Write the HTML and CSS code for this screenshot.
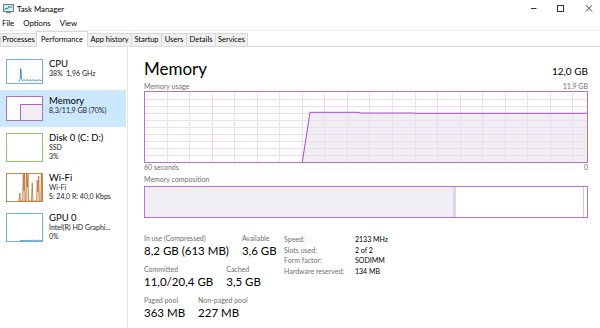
FILE: index.html
```html
<!DOCTYPE html>
<html>
<head>
<meta charset="utf-8">
<title>Task Manager</title>
<link rel="stylesheet" href="styles.css">
</head>
<body>
<div class="titlebar">
  <svg class="app-icon" width="11" height="11" viewBox="0 0 11 11">
    <rect x="0.5" y="1.5" width="10" height="7" fill="#d6ecfa" stroke="#6f8294"/>
    <polyline points="1.5,7 3,5 4.5,6 6,3 7.5,5 9.5,2.5" fill="none" stroke="#2f8f3a" stroke-width="0.9"/>
    <rect x="3" y="9" width="5" height="1.2" fill="#6f8294"/>
  </svg>
  <span class="title">Task Manager</span>
  <svg class="winctl" width="80" height="16" viewBox="0 0 80 16">
    <line x1="11" y1="8.5" x2="16.5" y2="8.5" stroke="#333" stroke-width="1"/>
    <rect x="37.5" y="5.5" width="6" height="6" fill="none" stroke="#333" stroke-width="1"/>
    <path d="M66 5.2L72 11.5M72 5.2L66 11.5" stroke="#333" stroke-width="0.9" fill="none"/>
  </svg>
</div>
<div class="menubar">
  <span>File</span><span>Options</span><span>View</span>
</div>
<div class="tabs">
  <div class="tab w1 first">Processes</div>
  <div class="tab w2 active">Performance</div>
  <div class="tab w3">App history</div>
  <div class="tab w4">Startup</div>
  <div class="tab w5">Users</div>
  <div class="tab w6">Details</div>
  <div class="tab w7">Services</div>
</div>
<div class="main">
  <div class="sidebar">
    <div class="item">
      <svg class="thumb" width="37" height="25" viewBox="0 0 37 25">
        <rect x="0.5" y="0.5" width="36" height="24" fill="#fff" stroke="#6fb0df"/>
        <polyline fill="none" stroke="#1f7fc1" stroke-width="0.8" points="13.5,22.5 14.2,20 14.8,9.5 15.5,19.5 16.5,21.6 18,20.8 19.5,21.7 21,20.6 22.5,21.6 24,20.9 25.5,21.7 27,20.7 28.5,21.5 30,20.9 31.5,21.6 33,20.8 34.5,21.5 36,21"/>
      </svg>
      <div class="info">
        <div class="name">CPU</div>
        <div class="sub">38%&nbsp; 1,96 GHz</div>
      </div>
    </div>
    <div class="item selected">
      <svg class="thumb" width="37" height="25" viewBox="0 0 37 25">
        <rect x="0.5" y="0.5" width="36" height="24" fill="#fff" stroke="#b66cd1"/>
        <path d="M14.5 24V8.5H36V24Z" fill="#f1eef3"/>
        <path d="M14.5 24V8.5H36.5" fill="none" stroke="#a24ec6" stroke-width="0.9"/>
      </svg>
      <div class="info">
        <div class="name">Memory</div>
        <div class="sub">8,3/11,9 GB (70%)</div>
      </div>
    </div>
    <div class="item tall">
      <svg class="thumb" width="37" height="29" viewBox="0 0 37 29">
        <rect x="0.5" y="0.5" width="36" height="28" fill="#fff" stroke="#8dca66"/>
      </svg>
      <div class="info">
        <div class="name">Disk 0 (C: D:)</div>
        <div class="sub">SSD</div>
        <div class="sub">3%</div>
      </div>
    </div>
    <div class="item tall">
      <svg class="thumb" width="37" height="29" viewBox="0 0 37 29">
        <rect x="0.5" y="0.5" width="36" height="28" fill="#fff" stroke="#c98848"/>
        <polygon fill="#f3dcc7" points="13,28 13.8,20 14.5,28 16.6,28 17.2,1 18,18 18.6,1 19.2,28 20,28 20.6,1 21.4,14 22,1 22.6,28 25.5,28 26.2,10 27,28 30.6,28 31.2,7 32,19 32.7,3 33.4,28 34.8,28 35.4,1 36,28"/>
        <polyline fill="none" stroke="#b9661f" stroke-width="0.7" points="13,28 13.8,20 14.5,28 16.6,28 17.2,1 18,18 18.6,1 19.2,28 20,28 20.6,1 21.4,14 22,1 22.6,28 25.5,28 26.2,10 27,28 30.6,28 31.2,7 32,19 32.7,3 33.4,28 34.8,28 35.4,1 36,28"/>
      </svg>
      <div class="info">
        <div class="name">Wi-Fi</div>
        <div class="sub">Wi-Fi</div>
        <div class="sub">S: 24,0 R: 40,0 Kbps</div>
      </div>
    </div>
    <div class="item tall">
      <svg class="thumb" width="37" height="29" viewBox="0 0 37 29">
        <rect x="0.5" y="0.5" width="36" height="28" fill="#fff" stroke="#6fb0df"/>
        <polyline fill="none" stroke="#1f7fc1" stroke-width="0.7" points="14,27.6 20,27.6 21,27 22,27.6 26,27.6 27,26.8 28,27.6 31,27.6 32,26.9 33,27.6 36,27.6"/>
      </svg>
      <div class="info">
        <div class="name">GPU 0</div>
        <div class="sub">Intel(R) HD Graphi...</div>
        <div class="sub">0%</div>
      </div>
    </div>
  </div>
  <div class="content">
    <div class="head">
      <h1>Memory</h1>
      <span class="total">12,0 GB</span>
    </div>
    <div class="caprow"><span>Memory usage</span><span>11,9 GB</span></div>
    <svg class="graph" width="444" height="72" viewBox="0 0 444 72">
      <rect x="0" y="0" width="444" height="72" fill="#fff"/>
      <polygon fill="#f1eef3" points="158.3,71 166,21.3 214,21.3 216,22 269,22 272,22.3 443,22.3 443,71"/>
      <path fill="none" stroke="#eddcf2" stroke-width="1" d="M1 8.5H443M1 15.5H443M1 22.5H443M1 29.5H443M1 36.5H443M1 43.5H443M1 50.5H443M1 57.5H443M1 64.5H443M23.5 1V71M45.5 1V71M68.5 1V71M90.5 1V71M113.5 1V71M135.5 1V71M158.5 1V71M180.5 1V71M203.5 1V71M225.5 1V71M248.5 1V71M271.5 1V71M293.5 1V71M316.5 1V71M338.5 1V71M361.5 1V71M383.5 1V71M406.5 1V71M428.5 1V71"/>
      <polyline fill="none" stroke="#a24ec6" stroke-width="1" points="158.3,71 166,21.3 214,21.3 216,22 269,22 272,22.3 442,22.3 443.5,21.3"/>
      <rect x="0.5" y="0.5" width="443" height="71" fill="none" stroke="#b970d3"/>
    </svg>
    <div class="axis"><span>60 seconds</span><span>0</span></div>
    <div class="complabel">Memory composition</div>
    <div class="comp">
      <div class="seg inuse"></div>
      <div class="seg modified"></div>
      <div class="seg standby"></div>
      <div class="seg free"></div>
    </div>
    <div class="stats">
      <div class="left">
        <div class="row">
          <div class="cell"><div class="lbl">In use (Compressed)</div><div class="val">8,2 GB (613 MB)</div></div>
          <div class="cell"><div class="lbl">Available</div><div class="val">3,6 GB</div></div>
        </div>
        <div class="row">
          <div class="cell"><div class="lbl">Committed</div><div class="val">11,0/20,4 GB</div></div>
          <div class="cell"><div class="lbl">Cached</div><div class="val">3,5 GB</div></div>
        </div>
        <div class="row">
          <div class="cell"><div class="lbl">Paged pool</div><div class="val">363 MB</div></div>
          <div class="cell"><div class="lbl">Non-paged pool</div><div class="val">227 MB</div></div>
        </div>
      </div>
      <div class="right">
        <span class="k">Speed:</span><span class="v">2133 MHz</span>
        <span class="k">Slots used:</span><span class="v">2 of 2</span>
        <span class="k">Form factor:</span><span class="v">SODIMM</span>
        <span class="k">Hardware reserved:</span><span class="v">134 MB</span>
      </div>
    </div>
  </div>
</div>
</body>
</html>
```
FILE: styles.css
```css
* { box-sizing: border-box; margin: 0; padding: 0; }
html, body { width: 600px; height: 328px; overflow: hidden; background: #fff; }
body { font-family: "Lato", "Open Sans", sans-serif; color: #000; font-size: 7px; }

.titlebar { height: 16px; display: flex; align-items: center; }
.app-icon { margin-left: 3px; display: block; }
.title { margin-left: 3px; font-size: 7.8px; line-height: 16px; padding-top: 1px; }
.winctl { margin-left: auto; display: block; }

.menubar { height: 14px; display: flex; gap: 9px; padding-left: 2px; font-size: 7.8px; line-height: 14px; }

.tabs { height: 17px; display: flex; align-items: flex-end; border-top: 1px solid #efefef; border-bottom: 1px solid #d9d9d9; }
.tab { height: 13px; line-height: 12px; text-align: center; font-size: 7.5px; background: #f0f0f0; border-top: 1px solid #d9d9d9; border-right: 1px solid #d9d9d9; white-space: nowrap; }
.tab.first { border-left: 1px solid #d9d9d9; }
.tab.active { height: 16px; margin-bottom: -1px; padding-top: 2px; background: #fff; border-left: 1px solid #d9d9d9; margin-left: -1px; }
.w1 { width: 37px; }
.w2 { width: 52px; }
.w3 { width: 44px; }
.w4 { width: 30px; }
.w5 { width: 25px; }
.w6 { width: 29px; }
.w7 { width: 32px; }

.main { display: flex; height: 281px; }
.sidebar { width: 128px; border-right: 1px solid #e6e6e6; padding-top: 6px; flex: 0 0 128px; }
.item { display: flex; width: 126px; padding: 6px 0 6px 6px; }
.item.tall { padding-bottom: 5px; }
.item.selected { background: #cce8ff; }
.thumb { display: block; flex: 0 0 auto; }
.info { margin-left: 6px; margin-top: -1px; }
.name { font-size: 9.5px; line-height: 11px; }
.sub { font-size: 7px; line-height: 9px; color: #1a1a1a; white-space: nowrap; }

.content { flex: 1; padding: 10px 12px 0 16px; }
.head { display: flex; justify-content: space-between; align-items: baseline; height: 24px; line-height: 24px; }
h1 { font-size: 17px; font-weight: 400; }
.total { font-size: 10px; }
.caprow, .axis { display: flex; justify-content: space-between; color: #6f6f6f; font-size: 7px; }
.caprow { height: 10px; line-height: 10px; }
.graph { display: block; }
.axis { height: 8px; line-height: 8px; }
.complabel { margin-top: 3px; height: 10px; line-height: 10px; color: #6f6f6f; }
.comp { margin-top: 2px; height: 32px; border: 1px solid #b970d3; display: flex; }
.seg { height: 100%; }
.inuse { flex: 0 0 308px; background: #f1eef3; }
.modified { flex: 0 0 3px; background: #e3d3e9; }
.standby { flex: 1; background: #fff; border-right: 1px solid #dcc3e5; }
.free { flex: 0 0 3px; background: #fff; }

.stats { margin-top: 16px; display: flex; }
.left { width: 140px; flex: 0 0 140px; }
.row { display: flex; gap: 13px; margin-bottom: 6px; }
.lbl { font-size: 7px; line-height: 9px; color: #6f6f6f; white-space: nowrap; }
.val { font-size: 11.5px; line-height: 16px; white-space: nowrap; }
.right { display: grid; grid-template-columns: 71px auto; font-size: 7px; line-height: 10.5px; align-content: start; }
.k { color: #6f6f6f; white-space: nowrap; }
.v { color: #000; white-space: nowrap; }
```
